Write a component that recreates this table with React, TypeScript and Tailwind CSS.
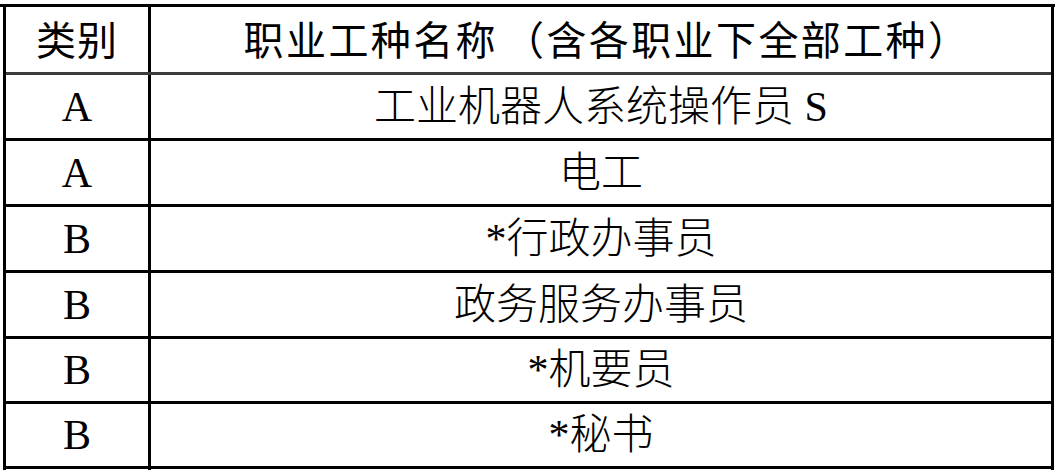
const rows: { cat: string; name: string; h: string }[] = [
  { cat: "A", name: "工业机器人系统操作员 S", h: "h-[66px]" },
  { cat: "A", name: "电工", h: "h-[66px]" },
  { cat: "B", name: "*行政办事员", h: "h-[66px]" },
  { cat: "B", name: "政务服务办事员", h: "h-[66px]" },
  { cat: "B", name: "*机要员", h: "h-[65px]" },
  { cat: "B", name: "*秘书", h: "h-[65px]" },
];

const serif = "font-['Liberation_Serif','Noto_Sans_CJK_SC',serif] font-light";

export default function App() {
  return (
    <div className="w-[1060px] h-[470px] overflow-hidden bg-white text-black">
      <div className="mt-[4px] w-[1055px] h-[3px] bg-black" />
      <div className="ml-[3px] w-[1051px] border-x-[3px] border-black">
        {/* header */}
        <div className="flex h-[68px] border-b-[3px] border-[#3c3c3c] font-['Noto_Sans_CJK_SC',sans-serif] font-normal text-[40px] leading-none">
          <div className="w-[145px] shrink-0 border-r-[3px] border-black flex items-center justify-center pb-[3px] tracking-[1px]">
            类别
          </div>
          <div className="flex-1 flex items-center justify-center pb-[3px] pl-[6px] tracking-[2.4px]">
            职业工种名称<span className="ml-[6px]">（</span>含各职业下全部工种<span className="mr-[-6px]">）</span>
          </div>
        </div>

        {rows.map((r, i) => (
          <div key={i} className={`flex ${r.h} border-b-[3px] border-black ${serif} text-[42px] leading-none`}>
            <div className="w-[145px] shrink-0 border-r-[3px] border-black flex items-center justify-center">
              {r.cat}
            </div>
            <div className="flex-1 flex items-center justify-center">{r.name}</div>
          </div>
        ))}

        {/* next row, cut off */}
        <div className="flex h-[40px]">
          <div className="w-[145px] shrink-0 border-r-[3px] border-black" />
          <div className="flex-1" />
        </div>
      </div>
    </div>
  );
}
